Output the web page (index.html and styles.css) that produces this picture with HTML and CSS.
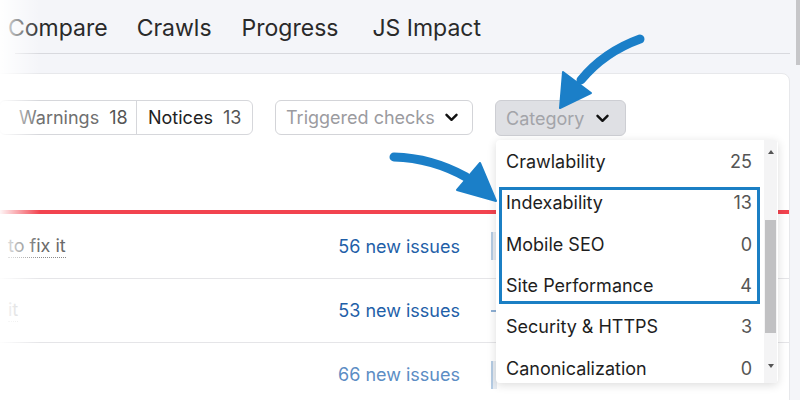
FILE: index.html
```html
<!DOCTYPE html>
<html>
<head>
<meta charset="utf-8">
<link rel="stylesheet" href="styles.css">
</head>
<body>
<div class="page">
  <nav class="tabs">
    <span class="tab t1">Compare</span>
    <span class="tab t2">Crawls</span>
    <span class="tab t3">Progress</span>
    <span class="tab t4">JS Impact</span>
  </nav>
  <div class="rule"></div>
  <div class="card">
    <div class="toolbar">
      <div class="seg-group">
        <span class="seg seg-first"><span class="lbl muted">Warnings</span><span class="num muted">18</span></span>
        <span class="seg seg-second"><span class="lbl">Notices</span><span class="num">13</span></span>
      </div>
      <div class="select trig">
        <span class="ph">Triggered checks</span>
        <svg class="chev" width="13" height="9" viewBox="0 0 13 9"><path d="M1.5 1.8 L6.5 6.8 L11.5 1.8" fill="none" stroke="#111" stroke-width="2.4" stroke-linecap="round" stroke-linejoin="round"/></svg>
      </div>
      <div class="cat-wrap">
        <div class="select cat">
          <span class="ph">Category</span>
          <svg class="chev" width="13" height="9" viewBox="0 0 13 9"><path d="M1.5 1.8 L6.5 6.8 L11.5 1.8" fill="none" stroke="#111" stroke-width="2.4" stroke-linecap="round" stroke-linejoin="round"/></svg>
        </div>
        <div class="dropdown">
          <ul class="list">
            <li class="item"><span>Crawlability</span><span class="cnt">25</span></li>
            <li class="item"><span>Indexability</span><span class="cnt">13</span></li>
            <li class="item"><span>Mobile SEO</span><span class="cnt">0</span></li>
            <li class="item"><span>Site Performance</span><span class="cnt">4</span></li>
            <li class="item"><span>Security &amp; HTTPS</span><span class="cnt">3</span></li>
            <li class="item"><span>Canonicalization</span><span class="cnt">0</span></li>
          </ul>
          <div class="dscroll">
            <span class="arr up"></span>
            <span class="thumb"></span>
            <span class="arr down"></span>
          </div>
          <div class="highlight"></div>
        </div>
      </div>
    </div>
    <div class="redline"></div>
    <div class="rows">
      <div class="row first">
        <div class="fix"><span class="how">to fix it</span></div>
        <a class="issues">56 new issues</a>
        <div class="tail"><span class="stub"></span></div>
      </div>
      <div class="row">
        <div class="fix"><span class="how faint">it</span></div>
        <a class="issues">53 new issues</a>
        <div class="tail"><span class="stub small"></span></div>
      </div>
      <div class="row faded">
        <div class="fix"></div>
        <a class="issues">66 new issues</a>
        <div class="tail"><span class="stub"></span></div>
      </div>
    </div>
  </div>
  <div class="pscroll"></div>
  <div class="fade-left"></div>
  <svg class="arrows" width="800" height="400" viewBox="0 0 800 400">
    <path d="M640 39 Q604 52 581 80" fill="none" stroke="#1b7fc8" stroke-width="9" stroke-linecap="round"/>
    <path d="M563 72 L591 93 L560 108 Z" fill="#1b7fc8" stroke="#1b7fc8" stroke-width="2" stroke-linejoin="round"/>
    <path d="M394 157 Q432 158 466 177" fill="none" stroke="#1b7fc8" stroke-width="9" stroke-linecap="round"/>
    <path d="M480 163 L457 190 L496 201 Z" fill="#1b7fc8" stroke="#1b7fc8" stroke-width="2" stroke-linejoin="round"/>
  </svg>
</div>
</body>
</html>
```
FILE: styles.css
```css
* { box-sizing: border-box; }
html, body { margin: 0; padding: 0; }
body {
  width: 800px;
  height: 400px;
  overflow: hidden;
  background: #f4f5f9;
  font-family: Inter, "Noto Sans", sans-serif;
  color: #222;
}
.page {
  position: relative;
  width: 800px;
  height: 400px;
  overflow: hidden;
}
.tabs {
  display: flex;
  height: 53px;
  padding: 4px 0 0 8px;
  font-size: 23px;
  line-height: 49px;
  color: #2a2a2a;
  white-space: nowrap;
}
.t2 { margin-left: 29px; }
.t3 { margin-left: 30px; }
.t4 { margin-left: 34px; }
.rule {
  height: 1px;
  margin-left: 15px;
  margin-right: 10px;
  background: #d8d9de;
}
.card {
  margin: 19px 10px 0 -10px;
  height: 330px;
  background: #fff;
  border: 1px solid #e7e8eb;
  border-radius: 0 8px 0 0;
}
.toolbar {
  display: flex;
  align-items: flex-start;
  padding: 26px 0 0 8px;
  height: 62px;
  font-size: 18px;
}
.seg-group {
  display: flex;
  height: 35px;
  border: 1px solid #d6d7db;
  border-radius: 6px;
}
.seg {
  display: flex;
  align-items: center;
  gap: 10px;
  padding: 0 0 0 11px;
  white-space: nowrap;
}
.seg-first {
  width: 137px;
  padding-left: 19px;
  border-right: 1px solid #d6d7db;
}
.seg-second { width: 115px; }
.muted { color: #6f6f6f; }
.num { color: #555; }
.select {
  display: flex;
  align-items: center;
  justify-content: space-between;
  height: 35px;
  border: 1px solid #d3d4d8;
  border-radius: 6px;
  white-space: nowrap;
}
.trig {
  width: 198px;
  margin-left: 22px;
  padding: 0 14px 0 10px;
}
.ph { color: #9b9b9f; }
.cat-wrap {
  position: relative;
  margin-left: 22px;
}
.cat {
  width: 131px;
  height: 36px;
  padding: 0 16px 0 10px;
  background: #dfe0e4;
  border-color: #cdced3;
}
.cat .ph { color: #a3a4a9; }
.dropdown {
  position: absolute;
  top: 40px;
  left: 1px;
  width: 282px;
  height: 243px;
  display: flex;
  background: #fff;
  border-radius: 4px;
  box-shadow: 0 2px 10px rgba(0,0,0,0.14);
  overflow: hidden;
  z-index: 5;
}
.list {
  list-style: none;
  margin: 0;
  padding: 1px 0 0 0;
  width: 268px;
  flex: none;
}
.item {
  display: flex;
  justify-content: space-between;
  align-items: center;
  height: 41.3px;
  padding: 0 12px 0 10px;
  font-size: 18px;
  color: #1e1e1e;
  white-space: nowrap;
}
.cnt { color: #555; }
.dscroll {
  position: relative;
  width: 13px;
  flex: none;
  background: #f4f4f5;
  display: flex;
  flex-direction: column;
  align-items: center;
}
.arr {
  width: 0;
  height: 0;
  border-left: 3px solid transparent;
  border-right: 3px solid transparent;
}
.up {
  margin-top: 10px;
  border-bottom: 4px solid #555;
}
.down {
  margin-top: 31px;
  border-top: 4px solid #555;
}
.thumb {
  width: 11px;
  height: 113px;
  margin-top: 66px;
  background: #c1c1c3;
}
.highlight {
  position: absolute;
  left: 3px;
  top: 47px;
  width: 261px;
  height: 117px;
  border: 3px solid #1b7fc4;
  pointer-events: none;
}
.redline {
  margin-top: 74px;
  height: 4px;
  background: #f2434f;
}
.row {
  display: flex;
  align-items: center;
  height: 64px;
  border-bottom: 1px solid #e5e5e8;
  font-size: 18px;
}
.row.first { height: 65px; }
.fix {
  display: flex;
  padding-left: 17px;
  width: 100px;
  white-space: nowrap;
}
.how {
  color: #6a6a6a;
  border-bottom: 1px dotted #8a8a8a;
  line-height: 22px;
}
.faint { color: #c2c2c2; border-bottom-color: #e0e0e0; }
.issues {
  margin-left: auto;
  color: #1f5fa8;
  white-space: nowrap;
}
.faded .issues { color: #5c8dc4; }
.tail {
  width: 329px;
  display: flex;
  align-items: center;
  padding-left: 31px;
}
.stub {
  display: block;
  width: 6px;
  height: 28px;
  background: #e6ebf1;
  border-left: 2px solid #b5cce4;
}
.stub.small {
  height: 2px;
  background: #8fb1d6;
  border: 0;
}
.pscroll {
  position: absolute;
  right: 0;
  top: 0;
  width: 4px;
  height: 65px;
  background: #c6c6c9;
}
.fade-left {
  position: absolute;
  left: 0;
  top: 0;
  width: 40px;
  height: 400px;
  background: linear-gradient(to right, rgba(255,255,255,0.95), rgba(255,255,255,0));
  pointer-events: none;
  z-index: 6;
}
.arrows {
  position: absolute;
  left: 0;
  top: 0;
  pointer-events: none;
  z-index: 10;
}
```
